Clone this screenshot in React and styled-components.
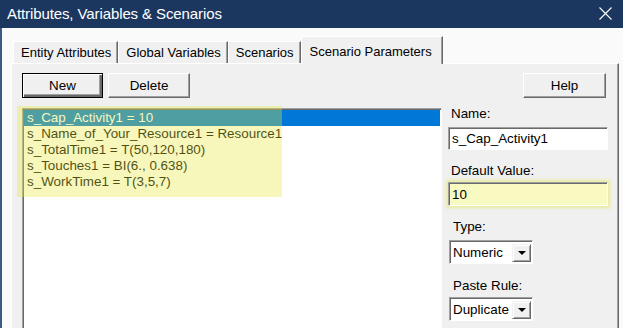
import React from "react";
import styled, { createGlobalStyle } from "styled-components";

const GlobalStyle = createGlobalStyle`
  html, body {
    margin: 0;
    padding: 0;
    width: 623px;
    height: 328px;
    overflow: hidden;
  }
  body {
    font-family: "Liberation Sans", Arial, sans-serif;
    font-size: 13px;
    color: #000;
  }
`;

const tabs = ["Entity Attributes", "Global Variables", "Scenarios", "Scenario Parameters"];

const params = [
  "s_Cap_Activity1 = 10",
  "s_Name_of_Your_Resource1 = Resource1",
  "s_TotalTime1 = T(50,120,180)",
  "s_Touches1 = BI(6., 0.638)",
  "s_WorkTime1 = T(3,5,7)",
];

export default function App() {
  return (
    <>
      <GlobalStyle />
      <Window>
        <TitleBar>
          <span>Attributes, Variables &amp; Scenarios</span>
          <svg width="13" height="13" viewBox="0 0 13 13">
            <path d="M0.5 0.5 L12.5 12.5 M12.5 0.5 L0.5 12.5" stroke="#fff" strokeWidth="1.1" />
          </svg>
        </TitleBar>
        <Body>
          <TabStrip>
            {tabs.map((t, i) => (
              <Tab key={t} $active={i === tabs.length - 1}>
                {t}
              </Tab>
            ))}
          </TabStrip>
          <Panel>
            <LeftCol>
              <ButtonRow>
                <Button $default $w={81}>New</Button>
                <Button $w={82}>Delete</Button>
              </ButtonRow>
              <ListBox>
                {params.map((p, i) => (
                  <ListRow key={p} $selected={i === 0}>
                    {p}
                  </ListRow>
                ))}
                <Highlight />
              </ListBox>
            </LeftCol>
            <RightCol>
              <Button $w={83} $right>Help</Button>
              <FieldLabel $mt={8}>Name:</FieldLabel>
              <TextBox $mt={5} $h={23} defaultValue="s_Cap_Activity1" />
              <FieldLabel $mt={13}>Default Value:</FieldLabel>
              <TextBox $mt={3} $h={24} $marked defaultValue="10" />
              <FieldLabel $mt={13} $indent={5}>Type:</FieldLabel>
              <Combo $mt={5}>
                <ComboText>Numeric</ComboText>
                <ComboButton>
                  <Arrow />
                </ComboButton>
              </Combo>
              <FieldLabel $mt={14} $indent={5}>Paste Rule:</FieldLabel>
              <Combo $mt={3}>
                <ComboText>Duplicate</ComboText>
                <ComboButton>
                  <Arrow />
                </ComboButton>
              </Combo>
            </RightCol>
          </Panel>
        </Body>
      </Window>
    </>
  );
}

const Window = styled.div`
  width: 623px;
  height: 328px;
  display: flex;
  flex-direction: column;
  overflow: hidden;
`;

const TitleBar = styled.div`
  flex: none;
  height: 28px;
  box-sizing: border-box;
  background: #1b375f;
  color: #fff;
  display: flex;
  align-items: center;
  justify-content: space-between;
  padding: 0 11px 1px 7px;
  font-size: 15px;
  letter-spacing: -0.1px;
  svg {
    display: block;
  }
`;

const Body = styled.div`
  flex: 1;
  min-height: 0;
  background: #fafafa;
  border-left: 2px solid #3b5b86;
  padding: 7px 4px 0 9px;
  display: flex;
  flex-direction: column;
`;

const TabStrip = styled.div`
  flex: none;
  height: 28px;
  display: flex;
  align-items: flex-end;
  padding-left: 2px;
`;

const Tab = styled.div`
  position: relative;
  z-index: ${(p) => (p.$active ? 1 : 0)};
  box-sizing: border-box;
  height: ${(p) => (p.$active ? 28 : 22)}px;
  margin-bottom: ${(p) => (p.$active ? -1 : 0)}px;
  padding: ${(p) => (p.$active ? "7px 10px 0 8px" : "3px 6px 0 7px")};
  line-height: 16px;
  white-space: nowrap;
  background: #f0f0f0;
  border-top: 1px solid #fff;
  border-left: 1px solid #fff;
  border-right: 1px solid #696969;
  box-shadow: inset -1px 0 #a0a0a0;
`;

const Panel = styled.div`
  flex: 1;
  min-height: 0;
  background: #f0f0f0;
  border-top: 1px solid #fff;
  border-left: 1px solid #fff;
  border-right: 1px solid #696969;
  box-shadow: inset -1px 0 #a0a0a0;
  padding: 9px 10px 0 10px;
  display: flex;
  gap: 6px;
`;

const LeftCol = styled.div`
  width: 420px;
  display: flex;
  flex-direction: column;
`;

const ButtonRow = styled.div`
  display: flex;
  gap: 5px;
`;

const Button = styled.div`
  box-sizing: border-box;
  width: ${(p) => p.$w}px;
  height: 25px;
  align-self: ${(p) => (p.$right ? "flex-end" : "auto")};
  margin-right: ${(p) => (p.$right ? 2 : 0)}px;
  display: flex;
  align-items: center;
  justify-content: center;
  font-size: 13.4px;
  background: #f0f0f0;
  border: 1px solid ${(p) => (p.$default ? "#000" : "#fff")};
  border-right-color: ${(p) => (p.$default ? "#000" : "#696969")};
  border-bottom-color: ${(p) => (p.$default ? "#000" : "#696969")};
  box-shadow: ${(p) =>
    p.$default
      ? "inset 1px 1px #fff, inset -2px -2px #696969, inset -3px -3px #a0a0a0"
      : "inset -1px -1px #a0a0a0"};
`;

const ListBox = styled.div`
  position: relative;
  margin-top: 10px;
  height: 260px;
  flex: none;
  background: #fff;
  border-top: 1px solid #a0a0a0;
  border-left: 1px solid #a0a0a0;
  border-right: 1px solid #fff;
  border-bottom: 1px solid #fff;
  box-shadow: inset 1px 1px #696969;
  padding: 1px 1px 0 1px;
`;

const ListRow = styled.div`
  height: 16px;
  line-height: 16px;
  padding-left: 3px;
  font-size: 13.4px;
  white-space: nowrap;
  background: ${(p) => (p.$selected ? "#0078d7" : "transparent")};
  color: ${(p) => (p.$selected ? "#fff" : "#000")};
`;

const Highlight = styled.div`
  position: absolute;
  left: -6px;
  top: -3px;
  width: 265px;
  height: 91px;
  background: rgba(232, 232, 60, 0.34);
  pointer-events: none;
`;

const RightCol = styled.div`
  width: 160px;
  display: flex;
  flex-direction: column;
`;

const FieldLabel = styled.div`
  margin-top: ${(p) => p.$mt}px;
  padding-left: ${(p) => p.$indent ?? 3}px;
  line-height: 16px;
  font-size: 13.4px;
  white-space: nowrap;
`;

const TextBox = styled.input`
  box-sizing: border-box;
  width: 160px;
  height: ${(p) => p.$h}px;
  margin: ${(p) => p.$mt}px 0 0 0;
  padding: 0 0 0 3px;
  font: inherit;
  font-size: 13.4px;
  color: #000;
  outline: none;
  background: ${(p) => (p.$marked ? "#f9f9c2" : "#fff")};
  border-top: 1px solid #a0a0a0;
  border-left: 1px solid #a0a0a0;
  border-right: 1px solid #fff;
  border-bottom: 1px solid #fff;
  box-shadow: ${(p) =>
    p.$marked
      ? "inset 1px 1px #696969, 0 0 3px 2px rgba(232, 232, 90, 0.55)"
      : "inset 1px 1px #696969"};
`;

const Combo = styled.div`
  box-sizing: border-box;
  width: 84px;
  height: 24px;
  margin: ${(p) => p.$mt}px 0 0 1px;
  display: flex;
  align-items: center;
  background: #fff;
  border-top: 1px solid #a0a0a0;
  border-left: 1px solid #a0a0a0;
  border-right: 1px solid #fff;
  border-bottom: 1px solid #fff;
  box-shadow: inset 1px 1px #696969;
  padding: 1px 1px 0 2px;
  overflow: hidden;
`;

const ComboText = styled.div`
  flex: 1;
  min-width: 0;
  padding-left: 1px;
  font-size: 13.4px;
  white-space: nowrap;
  overflow: hidden;
`;

const ComboButton = styled.div`
  flex: none;
  box-sizing: border-box;
  width: 19px;
  height: 18px;
  display: flex;
  align-items: center;
  justify-content: center;
  background: #f0f0f0;
  border-top: 1px solid #f0f0f0;
  border-left: 1px solid #f0f0f0;
  border-right: 1px solid #696969;
  border-bottom: 1px solid #696969;
  box-shadow: inset 1px 1px #fff, inset -1px -1px #a0a0a0;
`;

const Arrow = styled.div`
  width: 0;
  height: 0;
  border-left: 4px solid transparent;
  border-right: 4px solid transparent;
  border-top: 4px solid #000;
  margin-top: 1px;
`;
